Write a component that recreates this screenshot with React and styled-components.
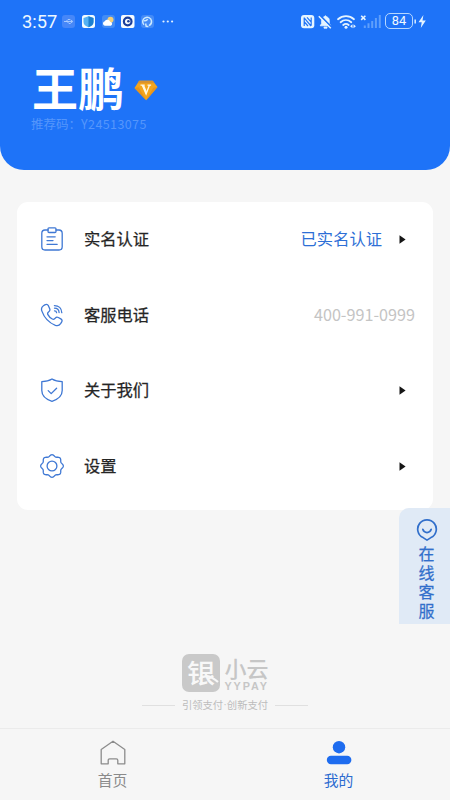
import styled, { createGlobalStyle } from "styled-components";

const GlobalStyle = createGlobalStyle`
  * {
    box-sizing: border-box;
  }
  body {
    margin: 0;
    background: #f6f6f6;
    font-family: "Noto Sans CJK SC", "Noto Sans", sans-serif;
  }
`;

export default function App() {
  return (
    <>
      <GlobalStyle />
      <Screen>
        <Header>
          <StatusBar />
          <NameRow>
            <Name>王鹏</Name>
            <VipIcon />
          </NameRow>
          <Code>
            推荐码：<span>Y24513075</span>
          </Code>
        </Header>
        <Menu>
          <MenuItem icon={<ClipboardIcon />} label="实名认证" status="已实名认证" arrow />
          <MenuItem icon={<PhoneIcon />} label="客服电话" phone="400-991-0999" />
          <MenuItem icon={<ShieldIcon />} label="关于我们" arrow />
          <MenuItem icon={<GearIcon />} label="设置" arrow />
        </Menu>
        <Brand />
        <Service>
          <ChatIcon />
          <ServiceText>在线客服</ServiceText>
        </Service>
        <TabBar>
          <Tab>
            <HomeIcon />
            首页
          </Tab>
          <Tab $active>
            <UserIcon />
            我的
          </Tab>
        </TabBar>
      </Screen>
    </>
  );
}

function StatusBar() {
  return (
    <Status>
      <Time>3:57</Time>
      <svg width="113" height="16" viewBox="0 0 113 16">
        <rect x="0" y="1" width="13" height="13" rx="3" fill="#4687f8" />
        <path d="M2 7.5h8M8.5 5.8l2.3 1.7-2.3 1.7M4 7.5l2-2h2M5 7.5l2 2h1.5" fill="none" stroke="#b9d7ff" strokeWidth="0.8" />
        <rect x="20" y="1" width="13" height="13" rx="2.5" fill="#f3fbff" />
        <path d="M26.5 2.3l5 1.6v4.200c0 2.600-2 4.200-5 5.100-3-.9-5-2.500-5-5.100V3.900z" fill="#55b2f4" />
        <path d="M26.500 2.300l5 1.600v4.200c0 2.600-2 4.200-5 5.100z" fill="#1c7fd0" />
        <rect x="40" y="1" width="13" height="13" rx="3" fill="#428cf5" />
        <circle cx="48.500" cy="5.700" r="3" fill="#f4cf77" />
        <path d="M42.800 11.800a2.300 2.300 0 0 1 0-4.500 3 3 0 0 1 5.400.5 2.100 2.100 0 0 1 .7 4z" fill="#fff" />
        <rect x="59" y="1" width="13.500" height="13" rx="2" fill="#f6fbff" />
        <circle cx="65.700" cy="7.500" r="3.800" fill="none" stroke="#1b3f9c" strokeWidth="2.200" />
        <circle cx="66.400" cy="7.200" r="1.300" fill="#1b3f9c" />
        <rect x="79" y="1" width="13" height="13" rx="3" fill="#448bf7" />
        <path d="M82 10.800a4.400 4.400 0 0 1 1-7c2.500-1.400 6-.2 6.500 3 .3 2-.8 3.800-2.400 4.800" fill="none" stroke="#cbe9ff" strokeWidth="1.500" />
        <path d="M82 6.600c1.800.5 3-.3 3.600-1.400M83.600 9.500l.6 2.800 2.200.2" fill="none" stroke="#cbe9ff" strokeWidth="1.500" />
        <g fill="#e2f2ff">
          <circle cx="101.500" cy="7.500" r="1.100" />
          <circle cx="105.800" cy="7.500" r="1.100" />
          <circle cx="110.100" cy="7.500" r="1.100" />
        </g>
      </svg>
      <Spacer />
      <svg width="59" height="18" viewBox="0 0 59 18">
        <rect x="0" y="2" width="13.300" height="13.300" rx="3" fill="#e5f4ff" />
        <path d="M3.200 4.600v8.400M6 4.300l4 4.600M3.400 5.200l6.600 7.800M3.400 9l3.600 4M10.200 4.400v8.400" fill="none" stroke="#2174f6" strokeWidth="1.200" />
        <path d="M19.200 12.800h10.600l-1.500-2.300V7.400c0-2-1.200-3.200-2.800-3.600-.3-1.300-1.800-1.300-2.100 0-1.700.4-2.800 1.700-2.800 3.600v3.100zM23 14h3v1.200h-3z" fill="#e5f4ff" stroke="#e5f4ff" strokeWidth="0.800" />
        <path d="M19 2.400L31.200 14.800" stroke="#1e73f7" strokeWidth="1.800" />
        <path d="M17.800 3.200L29.800 15.300" stroke="#e5f4ff" strokeWidth="1.500" />
        <g fill="none" stroke="#e5f4ff" strokeWidth="1.800" strokeLinecap="round">
          <path d="M37 6.200c4.800-4.100 11.300-4.100 16 0M39.600 9.200c3.100-2.700 7.500-2.700 10.700 0M42.200 12c1.600-1.300 3.900-1.300 5.500 0" />
        </g>
        <circle cx="45" cy="14.200" r="1.500" fill="#e5f4ff" />
        <path d="M51.500 11.200l-2.400 2 2.400 2zM52.500 11.200l2.400 2-2.400 2z" fill="#e5f4ff" />
      </svg>
      <svg width="22" height="18" viewBox="0 0 22 18">
        <path d="M1.200 2.700l4.200 4.200M5.400 2.700L1.200 6.900" stroke="#e5f4ff" strokeWidth="1.600" />
        <path d="M4.800 15v-2.500M8.500 15v-4.700M12.200 15V8M15.900 15V5M19.800 15V2" stroke="#5f9ffb" strokeWidth="2" />
      </svg>
      <Battery>84</Battery>
      <svg width="14" height="18" viewBox="0 0 14 18">
        <path d="M1.200 6.500v4" stroke="#cde6ff" strokeWidth="1.600" />
        <path d="M9.400 2L4.500 9.300h3.200l-.9 5.700 5-7.600H8.500z" fill="#e5f4ff" />
      </svg>
    </Status>
  );
}

function MenuItem({ icon, label, status, phone, arrow }) {
  return (
    <Row>
      {icon}
      <Label>{label}</Label>
      {status && <StatusText>{status}</StatusText>}
      {phone && <Phone>{phone}</Phone>}
      {arrow && (
        <Arrow viewBox="0 0 7 9">
          <path d="M0.500 0.300L6.600 4.500 0.500 8.700z" fill="#161616" />
        </Arrow>
      )}
    </Row>
  );
}

function Brand() {
  return (
    <BrandBox>
      <Logo>
        <LogoMark>
          <LogoChar>银</LogoChar>
          <LogoTail viewBox="0 0 38 38">
            <path d="M17 25c7-5 12-3 19 3" />
          </LogoTail>
        </LogoMark>
        <LogoText>
          <LogoName>小云</LogoName>
          <LogoSub>YYPAY</LogoSub>
        </LogoText>
      </Logo>
      <Slogan>
        <Line />
        <div>
          引领支付<Dot>·</Dot>创新支付
        </div>
        <Line />
      </Slogan>
    </BrandBox>
  );
}

function VipIcon() {
  return (
    <svg width="24" height="21" viewBox="0 0 24 21">
      <path d="M5.200.7h13.500L23.500 7 12.200 20.200.5 8z" fill="#f4a51d" />
      <path d="M5.200.7h13.500l1.800 2.500H3.600z" fill="#d9932e" />
      <path d="M.5 8l4.300-.8L12.200 20.200zM23.500 7l-4.200.8-7.100 12.400z" fill="#e8941b" />
      <path d="M6.500 5.200h4.200M13.500 5.200h3.600M8.300 5.200l3.800 8.800 3.300-8.800" fill="none" stroke="#fff8e3" strokeWidth="1.300" />
      <path d="M8 5.200h2.200l2.600 6.300-.7 2.700z" fill="#fff8e3" />
    </svg>
  );
}

function ClipboardIcon() {
  return (
    <ItemIcon viewBox="0 0 24 24">
      <path d="M8.200 3H5a3.200 3.200 0 0 0-3.200 3.200v13.600A3.200 3.200 0 0 0 5 23h14a3.200 3.200 0 0 0 3.200-3.200V6.200A3.200 3.200 0 0 0 19 3h-3" />
      <rect x="8" y="0.800" width="8" height="4.700" rx="1" />
      <path d="M7 9.800h8.200M7 13.600h6M7 17.300h10.200" />
    </ItemIcon>
  );
}

function PhoneIcon() {
  return (
    <ItemIcon viewBox="0 0 24 24">
      <path d="M3.400 2.700l1.400-.8c1.500-.8 3-.3 3.700 1l1.200 2.900c.5 1.200.1 2.200-.9 2.900-1.300.9-1.600 1.600-.9 2.900 1 1.900 2.500 3.400 4.400 4.400 1.400.7 2.100.4 3-.8.8-1.100 1.900-1.300 3-.7l2.500 1.300c1.300.7 1.600 2.100.8 3.300l-1 1.600c-1.200 1.700-3.200 2.300-5.200 1.600C9.600 20 4.100 14.300 1.900 8.100c-.7-2-.3-4.300 1.500-5.400z" />
      <path d="M14.400 2.600c4.300 0 7.200 2.900 7.400 7.100M14.500 5.200c2.600 0 4.400 1.700 4.600 4.300M14.500 7.800c1.200 0 2 .8 2.100 1.900" />
    </ItemIcon>
  );
}

function ShieldIcon() {
  return (
    <ItemIcon viewBox="0 0 24 24">
      <path d="M12 1c2.900 1.900 6.200 2.600 10.200 2.600v9c0 5.400-4.600 9-10.200 10.700C6.400 21.600 1.800 18 1.800 12.600v-9C5.800 3.600 9.100 2.900 12 1z" />
      <path d="M8.200 12.600l3 3 5.400-5.400" />
    </ItemIcon>
  );
}

// eight rounded teeth around the hub
const gearPoints = Array.from({ length: 96 }, (_, i) => {
  const a = (i / 96) * Math.PI * 2;
  const r = 10.5 + 0.85 * Math.cos(8 * a);
  return `${(12 + r * Math.sin(a)).toFixed(2)},${(12 - r * Math.cos(a)).toFixed(2)}`;
}).join(" ");

function GearIcon() {
  return (
    <ItemIcon viewBox="0 0 24 24">
      <polygon points={gearPoints} />
      <circle cx="12" cy="12" r="4.900" />
    </ItemIcon>
  );
}

function ChatIcon() {
  return (
    <svg width="22" height="22" viewBox="0 0 22 22" fill="none" stroke="#316fcb" strokeWidth="1.700" strokeLinecap="round" strokeLinejoin="round">
      <path d="M11 21.100l-3.900-2.500A9.300 9.300 0 1 1 14.900 18.600z" />
      <path d="M6.800 10.300c1.300 4.300 7.100 4.300 8.400 0" />
    </svg>
  );
}

function HomeIcon() {
  return (
    <svg width="26" height="25" viewBox="0 0 26 25" fill="none" stroke="#8c8c8c" strokeWidth="1.300" strokeLinejoin="round">
      <path d="M1.200 9.500L13 1.200l11.800 8.300v14.300h-7v-3.500q0-1.500-1.500-1.500H9.700q-1.500 0-1.500 1.500v3.500h-7z" />
    </svg>
  );
}

function UserIcon() {
  return (
    <svg width="26" height="25" viewBox="0 0 26 25" fill="#1e6cef">
      <circle cx="13" cy="7.200" r="6.200" />
      <rect x="0.800" y="15.800" width="24.600" height="8.400" rx="4.200" />
    </svg>
  );
}

const Screen = styled.div`
  width: 450px;
  height: 800px;
  display: flex;
  flex-direction: column;
  position: relative;
  overflow: hidden;
  background: #f6f6f6;
`;

const Header = styled.div`
  height: 170px;
  flex-shrink: 0;
  border-radius: 0 0 24px 24px;
  background: #1e73f8;
`;

const Status = styled.div`
  height: 44px;
  display: flex;
  align-items: center;
  padding: 0 22px;
`;

const Time = styled.div`
  width: 40px;
  color: #eef8ff;
  font-family: Roboto, sans-serif;
  font-size: 18.300px;
  line-height: 20px;
`;

const Spacer = styled.div`
  flex: 1;
`;

const Battery = styled.div`
  width: 28px;
  height: 16px;
  margin: 0 1px 2px 3px;
  border: 1.500px solid #b5d7ff;
  border-radius: 5px;
  color: #f0f9ff;
  font-family: Roboto, sans-serif;
  font-size: 12.800px;
  line-height: 14px;
  text-align: center;
`;

const NameRow = styled.div`
  height: 70px;
  display: flex;
  align-items: center;
  gap: 10px;
  padding: 14px 0 0 32px;
  svg {
    margin-top: 8px;
  }
`;

const Name = styled.div`
  color: #fff;
  font-size: 46px;
  font-weight: 700;
  line-height: 60px;
`;

const Code = styled.div`
  padding-left: 31px;
  color: #5596fb;
  font-size: 12.500px;
  line-height: 20px;
  span {
    letter-spacing: 0.400px;
  }
`;

const Menu = styled.div`
  height: 308px;
  flex-shrink: 0;
  margin: 32px 17px 0;
  border-radius: 11px;
  background: #fff;
`;

const Row = styled.div`
  height: 75.600px;
  display: flex;
  align-items: center;
  padding: 0 27px 0 23px;
`;

const ItemIcon = styled.svg`
  width: 24px;
  height: 24px;
  margin-bottom: 1px;
  fill: none;
  stroke: #3f78d4;
  stroke-width: 1.300;
  stroke-linecap: round;
  stroke-linejoin: round;
`;

const Label = styled.div`
  flex: 1;
  margin: 0 0 3px 20px;
  color: #252525;
  font-size: 16.300px;
  -webkit-text-stroke: 0.250px #252525;
  line-height: 24px;
`;

const StatusText = styled.div`
  margin: 0 17px 4px 0;
  color: #2d6fd6;
  font-size: 16.300px;
  line-height: 24px;
`;

const Phone = styled.div`
  margin: 0 -9px 3px 0;
  color: #c4c4c4;
  font-size: 16.200px;
  line-height: 24px;
`;

const Arrow = styled.svg`
  width: 7px;
  height: 9px;
`;

const BrandBox = styled.div`
  margin-top: 144px;
  display: flex;
  flex-direction: column;
  align-items: center;
`;

const Logo = styled.div`
  display: flex;
  gap: 5px;
`;

const LogoMark = styled.div`
  width: 38px;
  height: 38px;
  position: relative;
  border-radius: 7px;
  background: #c9c9c9;
`;

const LogoChar = styled.div`
  color: #f8f8f8;
  font-size: 26px;
  font-weight: 500;
  line-height: 36px;
  text-align: center;
  transform: scaleX(1.080);
`;

const LogoTail = styled.svg`
  position: absolute;
  top: 0;
  left: 0;
  width: 38px;
  height: 38px;
  fill: none;
  stroke: #f8f8f8;
  stroke-width: 2.200;
`;

const LogoText = styled.div`
  width: 44px;
  color: #c6c6c6;
`;

const LogoName = styled.div`
  font-size: 22px;
  font-weight: 500;
  line-height: 26px;
`;

const LogoSub = styled.div`
  padding-top: 1px;
  font-family: "Liberation Sans", sans-serif;
  font-size: 10.800px;
  font-weight: 700;
  letter-spacing: 1.900px;
  line-height: 10px;
`;

const Slogan = styled.div`
  display: flex;
  align-items: center;
  gap: 7px;
  margin-top: 5px;
  color: #bcbcbc;
  font-size: 10.300px;
  line-height: 16px;
`;

const Dot = styled.span`
  font-family: Roboto, sans-serif;
  margin: 0 0.500px;
`;

const Line = styled.div`
  width: 33px;
  height: 1px;
  background: #e0e0e0;
`;

const Service = styled.div`
  width: 51px;
  height: 116px;
  display: flex;
  flex-direction: column;
  align-items: center;
  position: absolute;
  top: 508px;
  right: 0;
  padding: 11px 0 0 4px;
  border-radius: 10px 0 0 0;
  background: #e0eaf6;
`;

const ServiceText = styled.div`
  width: 16px;
  margin-top: 3px;
  color: #316fcb;
  font-size: 16px;
  -webkit-text-stroke: 0.250px #316fcb;
  line-height: 19px;
  word-break: break-all;
`;

const TabBar = styled.div`
  height: 72px;
  display: flex;
  margin-top: auto;
  border-top: 1px solid #ebebeb;
`;

const Tab = styled.div`
  flex: 1;
  display: flex;
  flex-direction: column;
  align-items: center;
  gap: 5px;
  padding: 11px 0 0 ${(props) => (props.$active ? "3px" : "1px")};
  color: ${(props) => (props.$active ? "#2c6bd0" : "#8a8a8a")};
  font-size: 14.800px;
  line-height: 20px;
`;
